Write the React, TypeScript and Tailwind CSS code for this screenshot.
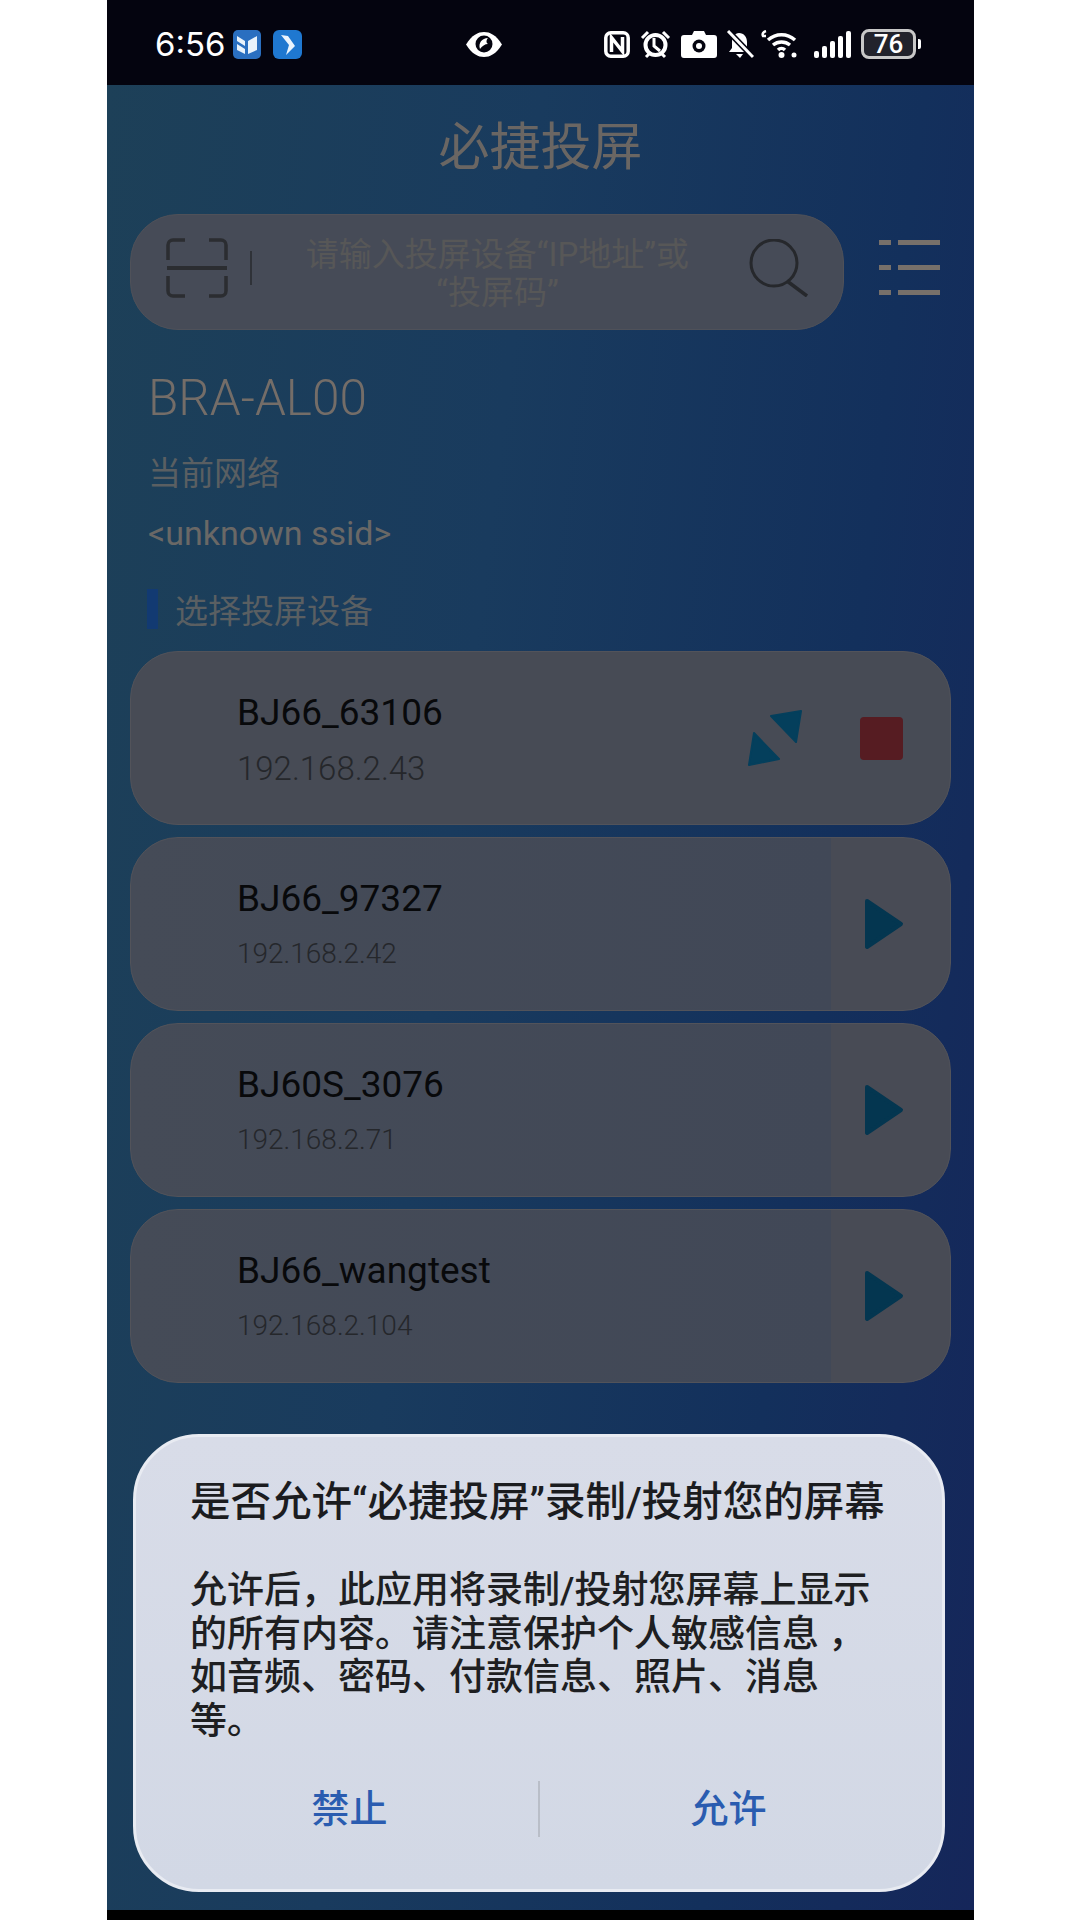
const devices = [
  { name: 'BJ66_97327', ip: '192.168.2.42' },
  { name: 'BJ60S_3076', ip: '192.168.2.71' },
  { name: 'BJ66_wangtest', ip: '192.168.2.104' },
]

// latin first so the curly quotes stay narrow, like the device font
const cjk = "font-['Roboto','Noto_Sans_CJK_SC',sans-serif]"

function AppIcons() {
  return (
    <div className="flex gap-[12px] ml-[7px]">
      <svg width="28" height="29" viewBox="0 0 28 29">
        <rect width="28" height="29" rx="5" fill="#2a6fc0" />
        <path d="M4 6l8 5v5L4 11zM4 14l8 5v5l-8-4zM24 6l-9 5v13l9-4z" fill="#e8f2fb" />
      </svg>
      <svg width="29" height="29" viewBox="0 0 29 29">
        <rect width="29" height="29" rx="6" fill="#1f78d0" />
        <path d="M8 5l7 1 7 10-9 9 3-10z" fill="#eaf4fd" />
      </svg>
    </div>
  )
}

function StatusIcons() {
  return (
    <div className="ml-auto flex items-center">
      {/* nfc */}
      <svg width="26" height="27" viewBox="0 0 26 27" fill="none" stroke="#fff" strokeWidth="3.5">
        <rect x="1.8" y="1.8" width="22.4" height="23.4" rx="5" />
        <path d="M7.5 21V6.5l11 14V6" />
      </svg>
      {/* alarm */}
      <svg className="ml-[10px]" width="31" height="29" viewBox="0 0 31 29" fill="none" stroke="#fff" strokeWidth="4">
        <circle cx="15.5" cy="15" r="10" />
        <path d="M14 8v8l6 5" strokeWidth="3" />
        <path d="M2 8l6-6M29 8l-6-6M6 27l3-3M25 27l-3-3" strokeWidth="3" />
      </svg>
      {/* camera */}
      <svg className="ml-[10px]" width="36" height="27" viewBox="0 0 36 27">
        <path d="M3 4h8l2-4h10l2 4h8a3 3 0 0 1 3 3v17a3 3 0 0 1-3 3H3a3 3 0 0 1-3-3V7a3 3 0 0 1 3-3z" fill="#fff" />
        <circle cx="18" cy="15" r="6.5" fill="#04040f" />
        <circle cx="18" cy="15" r="3" fill="#fff" />
      </svg>
      {/* muted bell */}
      <svg className="ml-[9px]" width="28" height="29" viewBox="0 0 28 29">
        <path d="M13 3c5 0 8 4 8 9v6l3 4H3l3-4v-6c0-5 3-9 7-9zM10 24h7l-3 4z" fill="#fff" />
        <path d="M2 1l25 26" stroke="#04040f" strokeWidth="6" />
        <path d="M2 1l25 26" stroke="#fff" strokeWidth="3" />
      </svg>
      {/* wifi 6 */}
      <svg className="ml-[7px]" width="40" height="29" viewBox="0 0 40 29" fill="none" stroke="#fff" strokeWidth="3.5">
        <path d="M7 10c8-7 19-7 27 0M12 15c5-4 12-4 17 0M17 20c2-2 5-2 7 0" />
        <circle cx="20.5" cy="25" r="3" fill="#fff" stroke="none" />
        <circle cx="33" cy="25" r="2.5" fill="#fff" stroke="none" />
        <path d="M5 1C2 2 1 4 2 6h3" strokeWidth="2.5" />
      </svg>
      {/* signal */}
      <div className="ml-[13px] flex items-end gap-[3px] h-[27px]">
        <div className="w-[5px] h-[7px] rounded-[2px] bg-white" />
        <div className="w-[5px] h-[12px] rounded-[2px] bg-white" />
        <div className="w-[5px] h-[17px] rounded-[2px] bg-white" />
        <div className="w-[5px] h-[22px] rounded-[2px] bg-white" />
        <div className="w-[5px] h-[27px] rounded-[2px] bg-white" />
      </div>
      {/* battery */}
      <div className="ml-[10px] flex items-center">
        <div className="w-[55px] h-[30px] rounded-[8px] border-[3px] border-[#c8c8c8] bg-[#22232c] flex items-center justify-center text-white text-[26px] leading-none font-medium font-['Roboto',sans-serif]">
          76
        </div>
        <div className="w-[3px] h-[10px] ml-[2px] rounded-r-[2px] bg-white" />
      </div>
    </div>
  )
}

function Play() {
  return (
    <svg width="40" height="52" viewBox="0 0 40 52">
      <path d="M3 3l34 23L3 49z" fill="#043650" stroke="#043650" strokeWidth="4" strokeLinejoin="round" />
    </svg>
  )
}

export default function App() {
  return (
    <div className="w-[1080px] h-[1920px] bg-white flex justify-center overflow-hidden">
      <div className="relative w-[867px] h-full ml-px flex flex-col bg-black">
        {/* status bar */}
        <div className="h-[85px] shrink-0 bg-[#04040f] flex items-center pl-[48px] pr-[53px] pt-[3px]">
          <div className="w-[310px] flex items-center">
            <span className="text-white text-[33px] leading-none font-['Inter',sans-serif]">6:56</span>
            <AppIcons />
          </div>
          <svg width="38" height="27" viewBox="0 0 38 27">
            <path d="M1 13.5C7 4 13 1 19 1s12 3 18 12.5C31 23 25 26 19 26S7 23 1 13.5z" fill="#fff" />
            <circle cx="19" cy="13" r="8.5" fill="#04040f" />
            <path d="M15 18c-2-6 2-11 8-11-2 2-2 5 0 6-3 0-6 2-8 5z" fill="#fff" />
          </svg>
          <StatusIcons />
        </div>

        {/* app content, dimmed by the dialog scrim */}
        <div className="h-[1825px] shrink-0 flex flex-col pl-[23px] pr-[23px] bg-[linear-gradient(97deg,#1d4058_0%,#193b5e_40%,#13305c_75%,#15265a_100%)]">
          <h1 className="mt-[23px] text-center text-[51px] leading-[70px] text-[#6a6663] font-['Noto_Sans_CJK_SC',sans-serif]">必捷投屏</h1>

          <div className="mt-[36px] flex items-center">
            <div className="w-[714px] h-[116px] rounded-[48px] bg-[#464b57] border border-[#4f5159] flex items-center pl-[35px] pr-[34px]">
              <svg className="mb-[8px]" width="62" height="60" viewBox="0 0 62 60" fill="none" stroke="#2b2d31" strokeWidth="3.5">
                <path d="M2 22V7a5 5 0 0 1 5-5h12M60 22V7a5 5 0 0 0-5-5H43M2 38v15a5 5 0 0 0 5 5h12M60 38v15a5 5 0 0 1-5 5H43" />
                <path d="M1 30h60" strokeWidth="4" />
              </svg>
              <div className="ml-[22px] mb-[8px] w-[2px] h-[34px] bg-[#2f3238]" />
              <div className={`flex-1 pt-[4px] pr-[6px] text-center text-[33px] leading-[38px] text-[#575757] ${cjk}`}>
                请输入投屏设备“IP地址”或
                <br />
                “投屏码”
              </div>
              <svg className="mb-[8px]" width="60" height="58" viewBox="0 0 60 58" fill="none" stroke="#26282c" strokeWidth="3">
                <circle cx="25" cy="24" r="23" />
                <path d="M38 42l20 15" strokeWidth="3.5" />
              </svg>
            </div>
            <div className="ml-[35px] mb-[10px] flex flex-col gap-[20px] w-[61px]">
              {[0, 1, 2].map(i => (
                <div key={i} className="flex gap-[7px]">
                  <div className="w-[12px] h-[5px] bg-[#77706a]" />
                  <div className="flex-1 h-[5px] bg-[#77706a]" />
                </div>
              ))}
            </div>
          </div>

          <div className="mt-[40px] ml-[18px] text-[49.5px] leading-[56px] font-light text-[#746d68] font-['Roboto',sans-serif]">BRA-AL00</div>
          <div className={`mt-[26px] ml-[18px] text-[33px] leading-[44px] text-[#5a5f62] ${cjk}`}>当前网络</div>
          <div className="mt-[15px] ml-[18px] text-[34px] leading-[44px] text-[#6a6866] font-['Roboto',sans-serif]">&lt;unknown ssid&gt;</div>

          <div className="mt-[31px] ml-[17px] flex items-center">
            <div className="w-[11px] h-[40px] bg-[#123a72]" />
            <div className={`ml-[17px] pt-[6px] text-[33px] leading-[40px] text-[#5a5f62] ${cjk}`}>选择投屏设备</div>
          </div>

          <div className="mt-[19px] flex flex-col gap-[12px]">
            <div className="h-[174px] rounded-[48px] bg-[#474b55] border border-[#52535a] flex items-center pl-[106px] pr-[47px]">
              <div className="flex-1 pt-[3px] font-['Roboto',sans-serif]">
                <div className="text-[37px] leading-[44px] text-[#08090b]">BJ66_63106</div>
                <div className="mt-[14px] text-[33px] leading-[40px] font-light text-[#25272b]">192.168.2.43</div>
              </div>
              <svg width="56" height="56" viewBox="0 0 56 56" className="mr-[57px]">
                <path d="M24 6l30-5-5 31z" fill="#043f5c" stroke="#043f5c" strokeWidth="2" strokeLinejoin="round" />
                <path d="M7 23l25 26-30 6z" fill="#043f5c" stroke="#043f5c" strokeWidth="2" strokeLinejoin="round" />
              </svg>
              <div className="w-[43px] h-[43px] rounded-[4px] bg-[#561c22]" />
            </div>

            {devices.map(d => (
              <div
                key={d.name}
                className="h-[174px] rounded-[48px] bg-[linear-gradient(90deg,#454b57_0%,#414857_85.5%,#484b55_85.5%)] border border-[#52535a] flex items-center pl-[106px] pr-[46px]"
              >
                <div className="flex-1 font-['Roboto',sans-serif]">
                  <div className="text-[37px] leading-[44px] text-[#08090b]">{d.name}</div>
                  <div className="mt-[15px] text-[28px] leading-[36px] font-light text-[#25272b]">{d.ip}</div>
                </div>
                <Play />
              </div>
            ))}
          </div>
        </div>

        {/* permission dialog */}
        <div className="absolute left-[26px] top-[1434px] w-[812px] h-[458px] rounded-[66px] border-[3px] border-[#e8ebf2] bg-[linear-gradient(180deg,#d8dce8,#d2d8e5)] pl-[54px] flex flex-col">
          <div className={`mt-[40px] text-[40.5px] leading-[50px] font-medium whitespace-nowrap text-[#1b1c1f] ${cjk}`}>
            是否允许“必捷投屏”录制/投射您的屏幕
          </div>
          <div className={`mt-[42px] text-[37px] leading-[43.5px] font-medium whitespace-nowrap text-[#1e1f22] ${cjk}`}>
            允许后，此应用将录制/投射您屏幕上显示
            <br />
            的所有内容。请注意保护个人敏感信息 ，
            <br />
            如音频、密码、付款信息、照片、消息
            <br />
            等。
          </div>
          <div className="mt-auto mb-[52px] -ml-[54px] px-[25px] flex items-center">
            <div className={`flex-1 text-center text-[38px] leading-[56px] font-medium text-[#2a5cb0] ${cjk}`}>禁止</div>
            <div className="w-[2px] h-[56px] bg-[#b9bec8]" />
            <div className={`flex-1 text-center text-[38px] leading-[56px] font-medium text-[#2a5cb0] ${cjk}`}>允许</div>
          </div>
        </div>
      </div>
    </div>
  )
}
